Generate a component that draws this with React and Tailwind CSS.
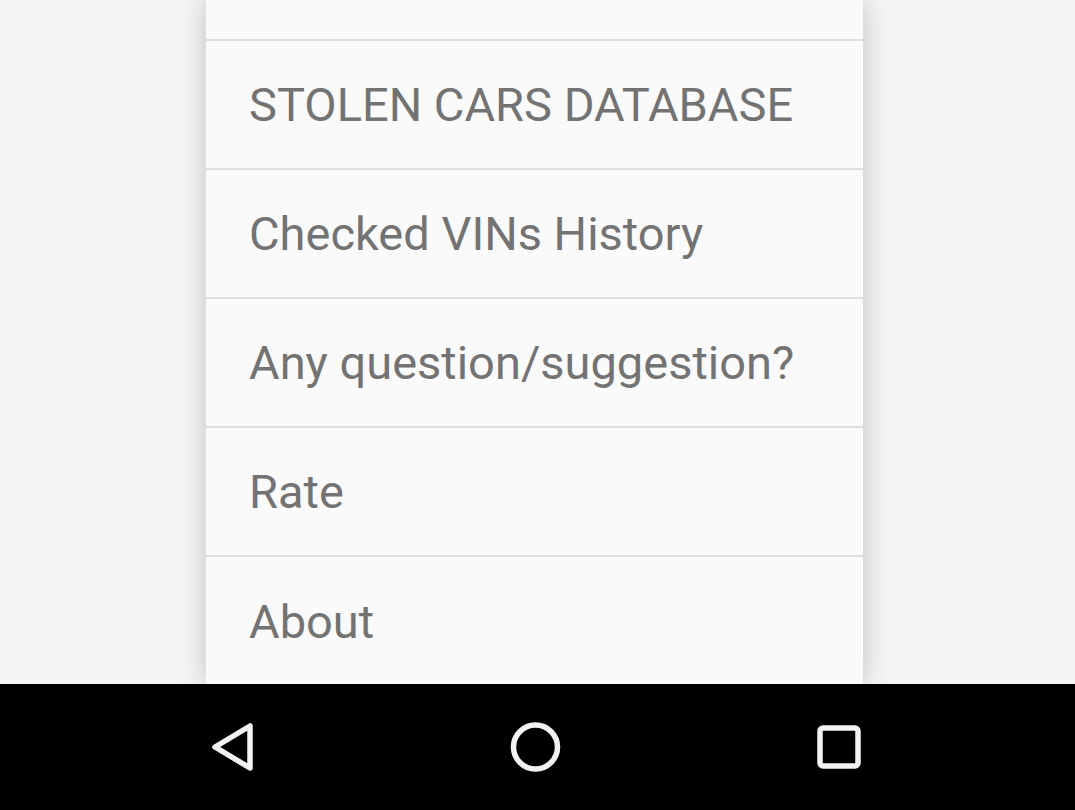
import React from "react";

const items = [
  "STOLEN CARS DATABASE",
  "Checked VINs History",
  "Any question/suggestion?",
  "Rate",
  "About",
];

export default function App() {
  return (
    <div className="w-[1075px] h-[810px] flex flex-col bg-[#f5f5f5] overflow-hidden" style={{ fontFamily: "Roboto, 'Noto Sans', sans-serif" }}>
      <div className="h-[684px] overflow-hidden">
        <div className="ml-[206px] w-[657px] h-[684px] bg-[#fafafa] shadow-[0_0_26px_rgba(0,0,0,0.22)] flex flex-col">
          <div className="h-[41px] shrink-0 border-b-2 border-[#dedede]" />
          {items.map((t, i) => (
            <div
              key={t}
              className={`h-[129px] shrink-0 flex items-center pl-[43px] pt-[2px] text-[47px] text-[#737373] ${i < items.length - 1 ? "border-b-2 border-[#dedede]" : ""}`}
            >
              {t}
            </div>
          ))}
        </div>
      </div>
      <div className="h-[126px] bg-black flex items-center">
        <svg width="1075" height="126" viewBox="0 0 1075 126">
          <path d="M250 42 L250 84 L215 63 Z" fill="none" stroke="#f2f2f2" strokeWidth="5.5" strokeLinejoin="round" />
          <circle cx="535.5" cy="63" r="22" fill="none" stroke="#f2f2f2" strokeWidth="5.5" />
          <rect x="820" y="44" width="38" height="38" rx="3" fill="none" stroke="#f2f2f2" strokeWidth="5.5" />
        </svg>
      </div>
    </div>
  );
}
